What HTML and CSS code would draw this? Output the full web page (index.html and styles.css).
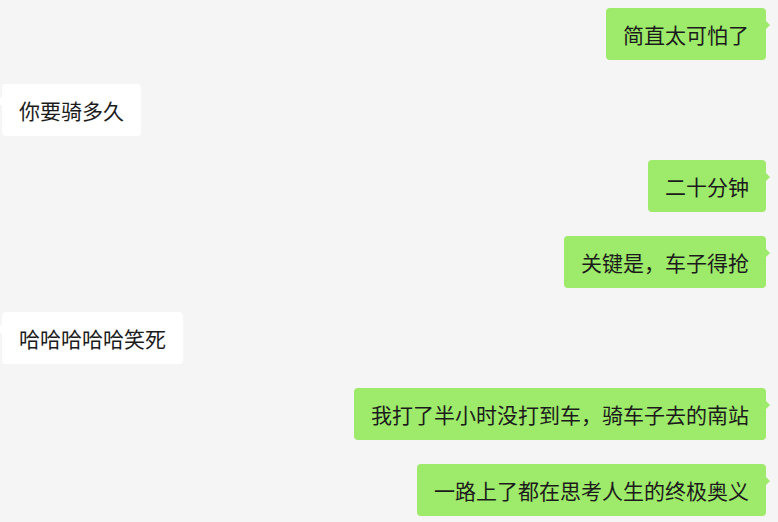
FILE: index.html
```html
<!DOCTYPE html>
<html lang="zh">
<head>
<meta charset="utf-8">
<link rel="stylesheet" href="styles.css">
</head>
<body>
<div class="chat">
  <div class="row right"><div class="bubble me">简直太可怕了</div></div>
  <div class="row left"><div class="bubble them">你要骑多久</div></div>
  <div class="row right"><div class="bubble me">二十分钟</div></div>
  <div class="row right"><div class="bubble me">关键是，车子得抢</div></div>
  <div class="row left"><div class="bubble them">哈哈哈哈哈笑死</div></div>
  <div class="row right"><div class="bubble me">我打了半小时没打到车，骑车子去的南站</div></div>
  <div class="row right"><div class="bubble me">一路上了都在思考人生的终极奥义</div></div>
</div>
</body>
</html>
```
FILE: styles.css
```css
html, body {
  margin: 0;
  padding: 0;
  background: #f5f5f5;
}
body {
  width: 778px;
  height: 522px;
  overflow: hidden;
  font-family: "Noto Sans CJK SC", "Noto Sans", sans-serif;
}
.chat {
  display: flex;
  flex-direction: column;
  gap: 24px;
  padding-top: 8px;
}
.row {
  display: flex;
}
.row.right {
  justify-content: flex-end;
  padding-right: 12px;
}
.row.left {
  justify-content: flex-start;
  padding-left: 2px;
}
.bubble {
  position: relative;
  height: 52px;
  line-height: 52px;
  padding: 0 17px;
  font-size: 21px;
  color: #1b1b1b;
  border-radius: 4px;
  white-space: nowrap;
  box-sizing: border-box;
}
.bubble.me {
  background: #9eea6a;
}
.bubble.them {
  background: #ffffff;
}
.bubble.me::after {
  content: "";
  position: absolute;
  right: -4px;
  top: 12px;
  border-style: solid;
  border-width: 5px 0 5px 5px;
  border-color: transparent transparent transparent #9eea6a;
}
.bubble.them::before {
  content: "";
  position: absolute;
  left: -5px;
  top: 12px;
  border-style: solid;
  border-width: 5px 5px 5px 0;
  border-color: transparent #ffffff transparent transparent;
}
```
